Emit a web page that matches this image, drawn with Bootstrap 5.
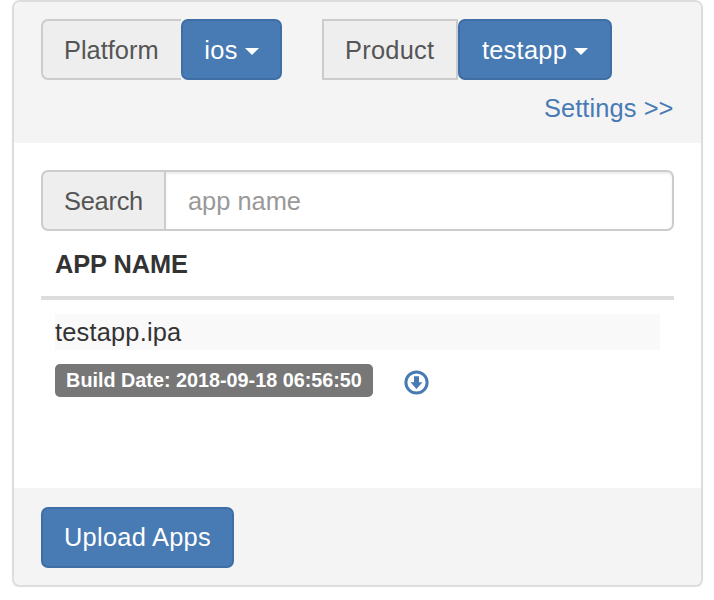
<!DOCTYPE html>
<html lang="en">
<head>
<meta charset="utf-8">
<meta name="viewport" content="width=device-width, initial-scale=1">
<title>Apps</title>
<link href="https://cdn.jsdelivr.net/npm/bootstrap@5.3.0/dist/css/bootstrap.min.css" rel="stylesheet">
<style>
body { font-family: "Liberation Sans", Arial, sans-serif; font-size: 25.4px; line-height: 36px; color: #333; background: #fff; overflow: hidden; }
.app-panel { width: 690.5px; height: 587px; margin-left: 12px; border: 2px solid #ddd; border-radius: 8px; box-shadow: 0 2px 2px rgba(0,0,0,.05); }
.app-panel > .card-header { height: 141px; padding: 17px 27px 0; background: #f4f4f4; border: 0; }
.app-panel > .card-body { padding: 27px 26.5px 0 27px; }
.app-panel > .card-footer { height: 97px; padding: 18.5px 27px 0; background: #f4f4f4; border: 0; }
.picker { height: 61px; width: auto; }
.picker .input-group-text, .search-box .input-group-text { font-size: inherit; line-height: 36px; color: #555; background: #eee; border: 2px solid #ccc; padding: 0 21px; }
.picker .input-group-text { border-radius: 7px 0 0 7px; }
.platform .input-group-text { width: 140px; border-right: 0; }
.product { margin-left: 40px; }
.product .input-group-text { width: 136px; border-radius: 0; letter-spacing: .25px; }
.btn-app { --bs-btn-bg: #487ab4; --bs-btn-color: #fff; --bs-btn-border-color: #3f6ea4; --bs-btn-hover-bg: #3b6797; --bs-btn-hover-color: #fff; --bs-btn-active-bg: #3b6797; --bs-btn-active-color: #fff; height: 61px; padding: 0 21px; font-size: inherit; line-height: 36px; letter-spacing: .27px; border-width: 2px; border-radius: 7px; }
.picker > .btn-app { border-radius: 7px !important; margin-left: 0 !important; }
.platform .btn-app { width: 101px; }
.product .btn-app { width: 154px; }
.btn-app.dropdown-toggle::after { margin-left: 7px; border-top: 7px solid; border-left: 7px solid transparent; border-right: 7px solid transparent; vertical-align: 4px; }
.settings { color: #487ab4; margin: 10px 0 0; line-height: 36px; letter-spacing: .1px; }
.search-box { height: 61px; }
.search-box .input-group-text { width: 125px; border-radius: 7px 0 0 7px; letter-spacing: -.25px; }
.search-box .form-control { font-size: inherit; border: 2px solid #ccc; border-left: 0; margin-left: 0 !important; padding: 2px 21px 0 22px; border-radius: 0 7px 7px 0; box-shadow: inset 0 2px 2px rgba(0,0,0,.075); }
.search-box .form-control::placeholder { color: #999; opacity: 1; }
.app-heading { height: 69px; padding: 15px 14px 0; border-bottom: 4px solid #ddd; font-weight: 700; line-height: 36px; letter-spacing: -.1px; }
.app-row { padding: 14px 14px 0; }
.app-title { height: 36px; background: #f9f9f9; letter-spacing: .2px; }
.build-line { margin-top: 14px; }
.build-label { height: 33px; width: 318px; padding: 0; font-size: 19.8px; line-height: 33px; background: #777; border-radius: 5px; }
.download { margin-left: 30.5px; margin-top: 4px; line-height: 0; color: #487ab4; }
</style>
</head>
<body>
<main class="card app-panel overflow-hidden">
  <header class="card-header">
    <div class="d-flex">
      <div class="input-group picker platform flex-nowrap">
        <span class="input-group-text">Platform</span>
        <button class="btn btn-app dropdown-toggle" type="button" data-bs-toggle="dropdown">ios</button>
      </div>
      <div class="input-group picker product flex-nowrap">
        <span class="input-group-text">Product</span>
        <button class="btn btn-app dropdown-toggle" type="button" data-bs-toggle="dropdown">testapp</button>
      </div>
    </div>
    <div class="d-flex justify-content-end"><a class="settings text-decoration-none" href="#">Settings &gt;&gt;</a></div>
  </header>
  <section class="card-body">
    <div class="input-group search-box flex-nowrap">
      <span class="input-group-text">Search</span>
      <input class="form-control" type="text" placeholder="app name" aria-label="app name">
    </div>
    <div class="app-heading">APP NAME</div>
    <div class="app-row">
      <div class="app-title">testapp.ipa</div>
      <div class="d-flex align-items-center build-line">
        <span class="badge build-label">Build Date: 2018-09-18 06:56:50</span>
        <a class="download" href="#" aria-label="Download">
          <svg width="25" height="25" viewBox="0 0 25 25"><circle cx="12.5" cy="12.5" r="10.6" fill="none" stroke="currentColor" stroke-width="3"/><path d="M10 6.3h5v6h3.5l-6 6.7-6-6.7H10z" fill="currentColor"/></svg>
        </a>
      </div>
    </div>
  </section>
  <footer class="card-footer">
    <button class="btn btn-app" type="button">Upload Apps</button>
  </footer>
</main>
<script src="https://cdn.jsdelivr.net/npm/bootstrap@5.3.0/dist/js/bootstrap.bundle.min.js"></script>
</body>
</html>
